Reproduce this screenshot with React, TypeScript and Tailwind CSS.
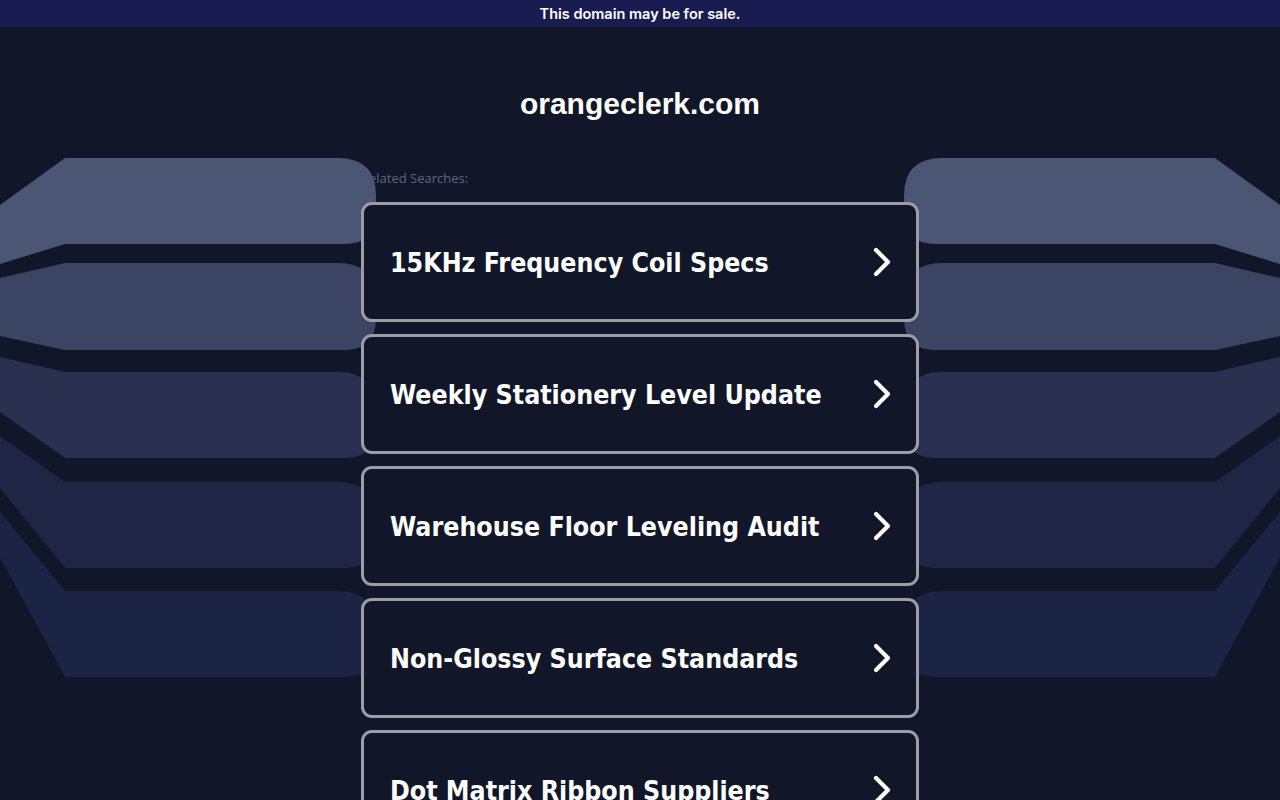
import React from "react";

const items = [
  "15KHz Frequency Coil Specs",
  "Weekly Stationery Level Update",
  "Warehouse Floor Leveling Audit",
  "Non-Glossy Surface Standards",
  "Dot Matrix Ribbon Suppliers",
];

const bands = [
  { x0t: 205, x0b: 264, ct: 158, cb: 244, fill: "#4b5674" },
  { x0t: 278, x0b: 336, ct: 263, cb: 350, fill: "#3b4462" },
  { x0t: 357, x0b: 412, ct: 372, cb: 458, fill: "#2a3150" },
  { x0t: 436, x0b: 488, ct: 482, cb: 568, fill: "#1e2545" },
  { x0t: 512, x0b: 557, ct: 591, cb: 677, fill: "#1c2446" },
];

function bandPath(b: { x0t: number; x0b: number; ct: number; cb: number }) {
  const cx = 65;
  const ex = 376;
  const r1 = 38;
  const r2 = 32;
  return `M0,${b.x0t} L${cx},${b.ct} L${ex - r1},${b.ct} Q${ex},${b.ct} ${ex},${b.ct + r1} L${ex},${b.cb - r2} Q${ex},${b.cb} ${ex - r2},${b.cb} L${cx},${b.cb} L0,${b.x0b} Z`;
}

function Background() {
  return (
    <svg
      className="absolute left-0 top-0 z-10 pointer-events-none"
      width="1280"
      height="800"
      viewBox="0 0 1280 800"
    >
      {bands.map((b, i) => (
        <path key={`l${i}`} d={bandPath(b)} fill={b.fill} />
      ))}
      <g transform="translate(1280,0) scale(-1,1)">
        {bands.map((b, i) => (
          <path key={`r${i}`} d={bandPath(b)} fill={b.fill} />
        ))}
      </g>
    </svg>
  );
}

function Chevron() {
  return (
    <svg width="22" height="32" viewBox="0 0 22 32" className="shrink-0">
      <path
        d="M5 4 L17 16 L5 28"
        fill="none"
        stroke="#ffffff"
        strokeWidth="4.2"
        strokeLinecap="round"
        strokeLinejoin="round"
      />
    </svg>
  );
}

export default function App() {
  return (
    <div className="relative w-full h-[800px] overflow-hidden bg-[#111729]">
      <div
        className="h-[27px] bg-[#181c50] flex items-center justify-center text-white text-[14.5px] font-semibold"
        style={{ fontFamily: "Inter, 'Open Sans', sans-serif" }}
      >
        This domain may be for sale.
      </div>
      <Background />
      <div
        className="mt-[59px] text-center text-white text-[30px] font-bold leading-[36px]"
        style={{ fontFamily: "'Liberation Sans', Arial, sans-serif" }}
      >
        orangeclerk.com
      </div>
      <div className="w-[558px] mx-auto">
        <div
          className="mt-[47px] text-[13px] leading-[18px] text-[#5b6582]"
          style={{ fontFamily: "'Open Sans', sans-serif" }}
        >
          Related Searches:
        </div>
        <div className="mt-[15px] flex flex-col gap-[12px]">
          {items.map((t) => (
            <div
              key={t}
              className="relative z-20 h-[120px] rounded-[11px] border-[3px] border-[#9d9ea5] bg-[#111729] flex items-center justify-between pl-[26px] pr-[23px]"
            >
              <span
                className="text-white font-bold text-[26.5px] leading-[32px] pt-[2px]"
                style={{ fontFamily: "'DejaVu Sans Condensed', 'DejaVu Sans', Verdana, sans-serif" }}
              >
                {t}
              </span>
              <Chevron />
            </div>
          ))}
        </div>
      </div>
    </div>
  );
}
